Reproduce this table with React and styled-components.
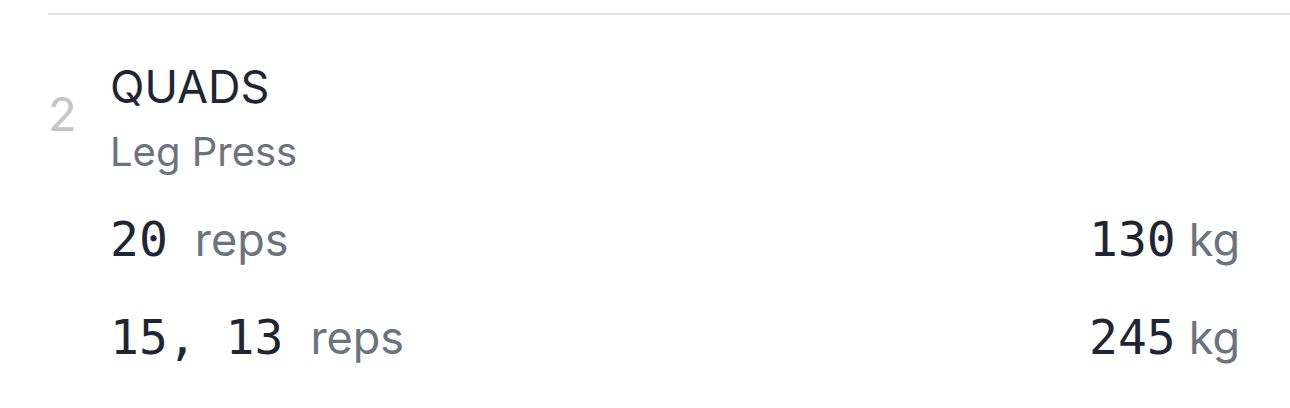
import React from "react";
import styled, { createGlobalStyle } from "styled-components";

const GlobalStyle = createGlobalStyle`
  body {
    margin: 0;
    background: #ffffff;
    font-family: Inter, "Noto Sans", sans-serif;
  }
`;

const exercise = {
  index: 2,
  group: "QUADS",
  name: "Leg Press",
  sets: [
    { reps: "20", weight: "130" },
    { reps: "15, 13", weight: "245" },
  ],
};

const App = () => {
  return (
    <>
      <GlobalStyle />
      <Wrapper>
        <Divider />
        <Exercise>
          <Index>{exercise.index}</Index>
          <Heading>
            <Group>{exercise.group}</Group>
            <Name>{exercise.name}</Name>
          </Heading>
          <Sets>
            {exercise.sets.map((set, idx) => (
              <SetRow key={idx}>
                <span>
                  <Value>{set.reps}</Value>
                  <Unit gap={27}>reps</Unit>
                </span>
                <span>
                  <Value>{set.weight}</Value>
                  <Unit gap={13}>kg</Unit>
                </span>
              </SetRow>
            ))}
          </Sets>
        </Exercise>
      </Wrapper>
    </>
  );
};

const Wrapper = styled.div`
  padding: 13px 0 0 48px;
`;
const Divider = styled.div`
  height: 2px;
  background: #e5e5e5;
`;
const Exercise = styled.div`
  display: grid;
  grid-template-columns: 62px 1fr;
  padding: 42px 50px 0 0;
`;
const Index = styled.div`
  align-self: center;
  margin-bottom: 10px;
  font-size: 47px;
  color: #c6c6c6;
`;
const Heading = styled.div`
  display: flex;
  flex-direction: column;
`;
const Group = styled.div`
  font-size: 45px;
  line-height: 60px;
  color: #1e2636;
`;
const Name = styled.div`
  margin-top: 8px;
  font-size: 40px;
  line-height: 54px;
  color: #6b7280;
`;
const Sets = styled.div`
  grid-column: 2;
  padding-top: 11px;
`;
const SetRow = styled.div`
  display: flex;
  justify-content: space-between;
  align-items: baseline;
  height: 98px;
  line-height: 98px;
`;
const Value = styled.span`
  font-family: "DejaVu Sans Mono", "Liberation Mono", monospace;
  font-size: 48px;
  color: #1e2636;
`;
const Unit = styled.span`
  margin-left: ${(p) => p.gap}px;
  font-size: 45px;
  color: #6b7280;
`;

export default App;
